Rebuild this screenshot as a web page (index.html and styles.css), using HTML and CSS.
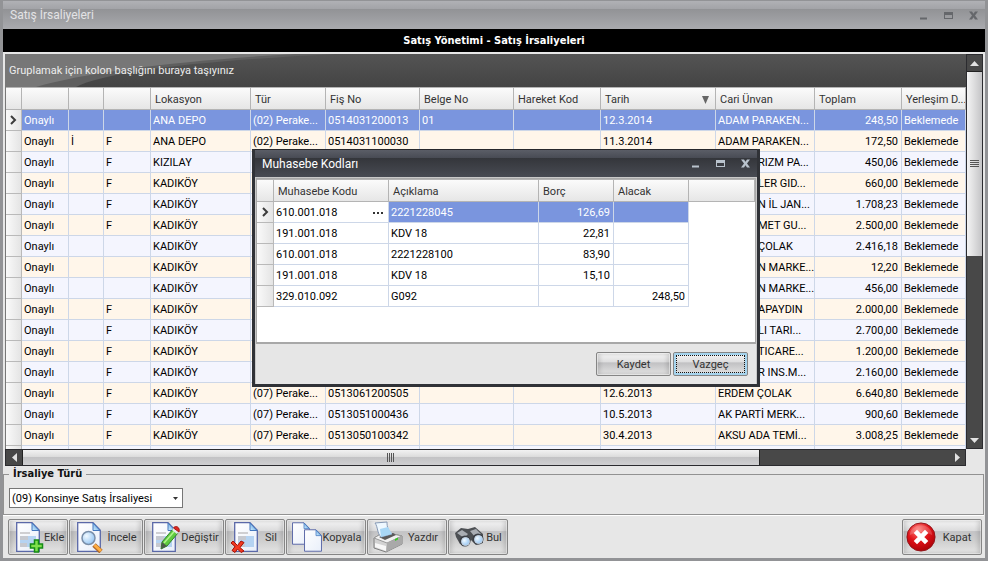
FILE: index.html
```html
<!DOCTYPE html>
<html lang="tr">
<head>
<meta charset="utf-8">
<title>Satış İrsaliyeleri</title>
<link rel="stylesheet" href="styles.css">
</head>
<body>
<svg class="defs" aria-hidden="true">
  <defs>
    <linearGradient id="sheet" x1="0" y1="0" x2="1" y2="1"><stop offset="0" stop-color="#fff"/><stop offset="1" stop-color="#e9effa"/></linearGradient>
    <linearGradient id="fold" x1="0" y1="1" x2="1" y2="0"><stop offset="0" stop-color="#d5f0fd"/><stop offset="1" stop-color="#3f8fdc"/></linearGradient>
    <radialGradient id="lens" cx=".35" cy=".35" r=".8"><stop offset="0" stop-color="#f2faff"/><stop offset="1" stop-color="#86bdf2"/></radialGradient>
    <radialGradient id="stop" cx=".4" cy=".25" r=".8"><stop offset="0" stop-color="#ff7d78"/><stop offset=".5" stop-color="#e01218"/><stop offset="1" stop-color="#a80006"/></radialGradient>
    <symbol id="page" viewBox="0 0 24 30">
      <path d="M.7.7H16L23.3 8.300V29.300H.7z" fill="url(#sheet)" stroke="#5a68a8" stroke-width="1.300"/>
      <path d="M16 1v7.500h7z" fill="url(#fold)" stroke="#4477bd"/>
    </symbol>
    <symbol id="doc" viewBox="0 0 24 30">
      <use href="#page" width="24" height="30"/>
      <path d="M4 10h10v2H4z" fill="#cfcfd2"/><path d="M4 14h16v11H4z" fill="#b5d3f2"/><path d="M4 14h8v4H4zM4 21h7v4H4z" fill="#c6c9d0"/>
    </symbol>
    <symbol id="pointer" viewBox="0 0 7 10"><path d="M1 1l4 4-4 4" fill="none" stroke="#3c3c3c" stroke-width="2"/></symbol>
    <symbol id="winmin" viewBox="0 0 9 9"><path d="M1 6.500h7v2H1z" fill="currentColor"/></symbol>
    <symbol id="winmax" viewBox="0 0 9 9"><path d="M0 1h9v7H0zM1 4v3h7V4z" fill="currentColor" fill-rule="evenodd"/></symbol>
    <symbol id="winclose" viewBox="0 0 9 9"><path d="M0 .5h3l1.500 2.300L6 .5h3L6 4.500l3 4H6L4.500 6.200 3 8.500H0l3-4z" fill="currentColor"/></symbol>
  </defs>
</svg>

<main class="window">
  <header class="titlebar">
    <h1>Satış İrsaliyeleri</h1>
    <div class="winctl">
      <button aria-label="Simge durumuna küçült"><svg><use href="#winmin"/></svg></button>
      <button aria-label="Ekranı kapla"><svg><use href="#winmax"/></svg></button>
      <button aria-label="Pencereyi kapat"><svg><use href="#winclose"/></svg></button>
    </div>
  </header>
  <h2 class="banner">Satış Yönetimi - Satış İrsaliyeleri</h2>

  <section class="gridbox">
    <div class="gridview">
      <div class="grouppanel">
        <svg viewBox="0 0 330 33" preserveAspectRatio="none"><path d="M0 0H330C190 7 100 18 70 33H0z" fill="#5f5f5f"/><path d="M0 0H290C180 6 80 18 30 33H0z" fill="#777"/></svg>
        <span>Gruplamak için kolon başlığını buraya taşıyınız</span>
      </div>
      <table class="data">
        <colgroup><col class="c-ind"><col class="c-durum"><col class="c-i"><col class="c-durum"><col class="c-lok"><col class="c-tur"><col class="c-no"><col class="c-no"><col class="c-tutar"><col class="c-tarih"><col class="c-cari"><col class="c-tutar"><col></colgroup>
        <thead><tr><th></th><th></th><th></th><th></th><th>Lokasyon</th><th>Tür</th><th>Fiş No</th><th>Belge No</th><th>Hareket Kod</th><th><div class="sorted">Tarih<svg viewBox="0 0 7 8"><path d="M0 0h7L3.500 8z"/></svg></div></th><th>Cari Ünvan</th><th>Toplam</th><th>Yerleşim D...</th></tr></thead>
        <tbody>
          <tr class="selected"><th><svg><use href="#pointer"/></svg></th><td>Onaylı</td><td></td><td></td><td>ANA DEPO</td><td>(02) Perake...</td><td>0514031200013</td><td>01</td><td></td><td>12.3.2014</td><td>ADAM PARAKEN...</td><td class="num">248,50</td><td>Beklemede</td></tr>
          <tr><th></th><td>Onaylı</td><td>İ</td><td>F</td><td>ANA DEPO</td><td>(02) Perake...</td><td>0514031100030</td><td></td><td></td><td>11.3.2014</td><td>ADAM PARAKEN...</td><td class="num">172,50</td><td>Beklemede</td></tr>
          <tr><th></th><td>Onaylı</td><td></td><td>F</td><td>KIZILAY</td><td></td><td></td><td></td><td></td><td></td><td class="tail">RIZM PA...</td><td class="num">450,06</td><td>Beklemede</td></tr>
          <tr><th></th><td>Onaylı</td><td></td><td>F</td><td>KADIKÖY</td><td></td><td></td><td></td><td></td><td></td><td class="tail">LER GID...</td><td class="num">660,00</td><td>Beklemede</td></tr>
          <tr><th></th><td>Onaylı</td><td></td><td>F</td><td>KADIKÖY</td><td></td><td></td><td></td><td></td><td></td><td class="tail">N İL JAN...</td><td class="num">1.708,23</td><td>Beklemede</td></tr>
          <tr><th></th><td>Onaylı</td><td></td><td>F</td><td>KADIKÖY</td><td></td><td></td><td></td><td></td><td></td><td class="tail">MET GU...</td><td class="num">2.500,00</td><td>Beklemede</td></tr>
          <tr><th></th><td>Onaylı</td><td></td><td></td><td>KADIKÖY</td><td></td><td></td><td></td><td></td><td></td><td class="tail">ÇOLAK</td><td class="num">2.416,18</td><td>Beklemede</td></tr>
          <tr><th></th><td>Onaylı</td><td></td><td></td><td>KADIKÖY</td><td></td><td></td><td></td><td></td><td></td><td class="tail">N MARKE...</td><td class="num">12,20</td><td>Beklemede</td></tr>
          <tr><th></th><td>Onaylı</td><td></td><td></td><td>KADIKÖY</td><td></td><td></td><td></td><td></td><td></td><td class="tail">N MARKE...</td><td class="num">456,00</td><td>Beklemede</td></tr>
          <tr><th></th><td>Onaylı</td><td></td><td>F</td><td>KADIKÖY</td><td></td><td></td><td></td><td></td><td></td><td class="tail">APAYDIN</td><td class="num">2.000,00</td><td>Beklemede</td></tr>
          <tr><th></th><td>Onaylı</td><td></td><td>F</td><td>KADIKÖY</td><td></td><td></td><td></td><td></td><td></td><td class="tail">LI TARI...</td><td class="num">2.700,00</td><td>Beklemede</td></tr>
          <tr><th></th><td>Onaylı</td><td></td><td>F</td><td>KADIKÖY</td><td></td><td></td><td></td><td></td><td></td><td class="tail">TICARE...</td><td class="num">1.200,00</td><td>Beklemede</td></tr>
          <tr><th></th><td>Onaylı</td><td></td><td>F</td><td>KADIKÖY</td><td></td><td></td><td></td><td></td><td></td><td class="tail">R INS.M...</td><td class="num">2.160,00</td><td>Beklemede</td></tr>
          <tr><th></th><td>Onaylı</td><td></td><td>F</td><td>KADIKÖY</td><td>(07) Perake...</td><td>0513061200505</td><td></td><td></td><td>12.6.2013</td><td>ERDEM ÇOLAK</td><td class="num">6.640,80</td><td>Beklemede</td></tr>
          <tr><th></th><td>Onaylı</td><td></td><td>F</td><td>KADIKÖY</td><td>(07) Perake...</td><td>0513051000436</td><td></td><td></td><td>10.5.2013</td><td>AK PARTİ MERK...</td><td class="num">900,60</td><td>Beklemede</td></tr>
          <tr><th></th><td>Onaylı</td><td></td><td>F</td><td>KADIKÖY</td><td>(07) Perake...</td><td>0513050100342</td><td></td><td></td><td>30.4.2013</td><td>AKSU ADA TEMİ...</td><td class="num">3.008,25</td><td>Beklemede</td></tr>
          <tr><th></th><td></td><td></td><td></td><td></td><td></td><td></td><td></td><td></td><td></td><td></td><td></td><td></td></tr>
        </tbody>
      </table>
    </div>
    <div class="scroll vert">
      <button aria-label="Yukarı kaydır"><svg viewBox="0 0 9 5"><path d="M0 5L4.500 0 9 5z"/></svg></button>
      <div class="thumb"><i></i></div>
      <button aria-label="Aşağı kaydır"><svg viewBox="0 0 9 5"><path d="M0 0h9L4.500 5z"/></svg></button>
    </div>
    <div class="scroll horz">
      <button aria-label="Sola kaydır"><svg viewBox="0 0 5 9"><path d="M5 0v9L0 4.500z"/></svg></button>
      <div class="thumb"><i></i></div>
      <button aria-label="Sağa kaydır"><svg viewBox="0 0 5 9"><path d="M0 0v9l5-4.500z"/></svg></button>
    </div>
  </section>

  <fieldset class="kind">
    <legend><label for="kind">İrsaliye Türü</label></legend>
    <div class="combo">
      <select id="kind"><option>(09) Konsinye Satış İrsaliyesi</option></select>
      <svg viewBox="0 0 5 3"><path d="M0 0h5L2.500 3z"/></svg>
    </div>
  </fieldset>

  <nav class="toolbar">
    <button class="tool w-s"><svg viewBox="0 0 30 32"><use href="#doc" x="2" y="1" width="24" height="30"/><path d="M20.500 19h4v4h4v4h-4v4h-4v-4h-4v-4h4z" fill="#7fe04c" stroke="#148a16" stroke-width="1.500"/></svg><span>Ekle</span></button>
    <button class="tool w-m"><svg viewBox="0 0 30 32"><use href="#page" x="2" y="1" width="24" height="30"/><path d="M19 24l7 6.500" stroke="#b06a2c" stroke-width="5"/><path d="M19.500 24l6.500 6" stroke="#ffae42" stroke-width="3"/><circle cx="13.500" cy="17" r="6.500" fill="url(#lens)" stroke="#7a8fa9" stroke-width="1.500"/></svg><span>İncele</span></button>
    <button class="tool w-l"><svg viewBox="0 0 30 32"><use href="#doc" x="2" y="1" width="24" height="30"/><path d="M12 21l11-13 5 4-11 13-6 3z" fill="#5ecb3e" stroke="#33842a"/><path d="M14 22L25 9.500" stroke="#b4f28e" stroke-width="1.500"/><path d="M12 21l5 4-6 3z" fill="#4c5b4b"/><path d="M22 9l1.500-2 5 4-1.500 2z" fill="#e7e7ef"/><path d="M23.500 7c2-3 7-1 5.500 4z" fill="#e0271f" stroke="#a41b14"/></svg><span>Değiştir</span></button>
    <button class="tool w-s"><svg viewBox="0 0 30 32"><use href="#doc" x="3" y="1" width="24" height="30"/><path d="M2 20l4.500 4.500L10 20l3 1.500-4 5 4 3.500-3 1.500-3.500-3.500L4 31.500l-3-2 3-4L0 22z" fill="#f23a22" stroke="#a31208"/></svg><span>Sil</span></button>
    <button class="tool w-l"><svg viewBox="0 0 30 32"><use href="#page" x="0" y="1" width="18" height="23"/><use href="#page" x="12" y="8" width="18" height="23"/></svg><span>Kopyala</span></button>
    <button class="tool w-l"><svg viewBox="0 0 30 32"><path d="M1 17l10-6 18 4v8L13 31 1 27z" fill="#d2d2d2" stroke="#7f7f7f"/><path d="M1 17l10-6 18 4-15 7z" fill="#f1f1f1" stroke="#999"/><path d="M14 22l15-7v8l-16 8z" fill="#a9a9a9"/><path d="M2 22l11 3v5L2 26z" fill="#f7f7f7"/><path d="M6 16l14-4 3 2-11 5z" fill="#5b5b5b"/><path d="M2 2l12-1c0 5 1 9 5 12l-11 3C4 12 5 6 2 2z" fill="#eef8ff" stroke="#8598b4"/><path d="M7 8l8-2 4 7-11 3z" fill="#a8d7f6"/><path d="M22 18l3-1.500v2l-3 1.500z" fill="#38c926"/></svg><span>Yazdır</span></button>
    <button class="tool w-s"><svg viewBox="0 0 30 32"><path d="M1 12l6-5 7 1 7-2 8 7v9l-7 2-5-5-4 5-7-1-4-7z" fill="#4d5054"/><path d="M3 12l5-3 6 4-4 4zM16 10l6-2 5 5-6 3z" fill="#a9adb3"/><circle cx="11" cy="20" r="5.500" fill="#3b3f46"/><circle cx="24" cy="18" r="5.500" fill="#3b3f46"/><circle cx="11.500" cy="20.500" r="4" fill="url(#lens)" stroke="#c9d5e2"/><circle cx="24.500" cy="18.500" r="4" fill="url(#lens)" stroke="#c9d5e2"/></svg><span>Bul</span></button>
    <button class="tool w-l close"><svg viewBox="0 0 32 32"><circle cx="16" cy="16" r="15" fill="url(#stop)" stroke="#8e1218"/><path d="M4 14C5 0 27 0 28 14c-8-4-16-4-24 0z" fill="#fff" opacity=".18"/><path d="M10 10l12 12M22 10L10 22" stroke="#fff" stroke-width="5"/></svg><span>Kapat</span></button>
  </nav>
</main>

<section class="dialog" role="dialog" aria-labelledby="dlgtitle">
  <header class="titlebar">
    <h2 id="dlgtitle">Muhasebe Kodları</h2>
    <div class="winctl">
      <button aria-label="Küçült"><svg><use href="#winmin"/></svg></button>
      <button aria-label="Büyüt"><svg><use href="#winmax"/></svg></button>
      <button aria-label="Kapat"><svg><use href="#winclose"/></svg></button>
    </div>
  </header>
  <div class="dlgbody">
    <div class="dlggrid">
      <table class="data plain">
        <colgroup><col class="c-ind2"><col class="c-kod"><col class="c-acik"><col class="c-tur"><col class="c-tur"><col></colgroup>
        <thead><tr><th></th><th>Muhasebe Kodu</th><th>Açıklama</th><th>Borç</th><th>Alacak</th><th></th></tr></thead>
        <tbody>
          <tr class="selected"><th><svg><use href="#pointer"/></svg></th><td class="editing"><div>610.001.018<button aria-label="Seç"><i></i><i></i><i></i></button></div></td><td>2221228045</td><td class="num">126,69</td><td></td><td class="rest"></td></tr>
          <tr><th></th><td>191.001.018</td><td>KDV 18</td><td class="num">22,81</td><td></td><td class="rest"></td></tr>
          <tr><th></th><td>610.001.018</td><td>2221228100</td><td class="num">83,90</td><td></td><td class="rest"></td></tr>
          <tr><th></th><td>191.001.018</td><td>KDV 18</td><td class="num">15,10</td><td></td><td class="rest"></td></tr>
          <tr><th></th><td>329.010.092</td><td>G092</td><td></td><td class="num">248,50</td><td class="rest"></td></tr>
        </tbody>
      </table>
    </div>
    <footer class="actions">
      <button class="act">Kaydet</button>
      <button class="act focused">Vazgeç</button>
    </footer>
  </div>
</section>
</body>
</html>
```
FILE: styles.css
```css
* { box-sizing: border-box; }
body, h1, h2 { margin: 0; }
body, button, select {
  font-family: Roboto, "Noto Sans", sans-serif;
  font-size: 11px;
}
button { padding: 0; border: 0; background: none; color: inherit; }
.defs { position: absolute; width: 0; height: 0; }

.window {
  display: flex;
  flex-direction: column;
  height: 100vh;
  border: solid #929396;
  border-width: 1px 3px 3px;
  background: #e7e7e7;
}
.titlebar {
  display: flex;
  align-items: center;
  justify-content: space-between;
  height: 28px;
  padding: 0 7px;
  background: linear-gradient(#b0b1b5, #a2a3a7 29%, #929396 30%, #a9aaae);
  color: #e3e3e5;
}
.titlebar h1, .titlebar h2 { font-size: 12px; font-weight: 400; }
.winctl { display: flex; gap: 16px; color: #65676b; }
.winctl button { display: flex; }
.winctl svg { width: 9px; height: 9px; }
.banner {
  height: 23px;
  background: #000;
  color: #fff;
  font: bold 11px/24px "DejaVu Sans Condensed", sans-serif;
  text-align: center;
}

.gridbox {
  flex: 1;
  display: grid;
  grid-template: minmax(0, 1fr) 17px / minmax(0, 1fr) 17px;
  min-height: 0;
  margin: 2px 2px 0;
}
.gridview { overflow: hidden; border-left: 1px solid #777; background: #fff; }
.grouppanel {
  position: relative;
  height: 33px;
  padding-left: 3px;
  background: linear-gradient(#545454, #444);
  color: #ededed;
  line-height: 34px;
}
.grouppanel svg { position: absolute; left: 0; top: 0; width: 330px; height: 33px; }
.grouppanel span { position: relative; }

.data { width: 100%; table-layout: fixed; border-spacing: 0; color: #000; }
.data th, .data td {
  height: 21px;
  padding: 2px 2px 0;
  overflow: hidden;
  border: solid #cdd7e8;
  border-width: 0 1px 1px 0;
  line-height: 18px;
  font-weight: 400;
  text-align: left;
  white-space: nowrap;
}
.data thead th {
  height: 23px;
  padding: 2px 0 0 4px;
  border-color: #b4b4b4;
  border-top: 1px solid #b4b4b4;
  background: linear-gradient(#fbfbfb, #e6e6e6);
  color: #333;
}
.data tbody th { padding: 0; border-color: #b9b9b9; background: linear-gradient(90deg, #fafafa, #e4e4e4); text-align: center; }
.data tbody th svg { display: block; width: 7px; height: 10px; margin: auto; }
.data tr:nth-child(even) td { background: #fff6ea; }
.data tr:nth-child(odd) td { background: #f4f5fe; }
.data.plain tr td { background: #fff; }
.data tr.selected td { background: #7a95de; color: #fff; }
.data .num { text-align: right; padding-right: 3px; }
.data .tail { padding-left: 42px; }
.data .rest { border: 0; }
.data.plain tr td.rest { background: #fff; }
.data.plain tr td.editing { background: #fff; color: #000; }
.editing div { display: flex; justify-content: space-between; }
.editing button { display: flex; align-items: center; gap: 2px; padding-right: 3px; }
.editing i { width: 2px; height: 2px; background: #333; }
.sorted { display: flex; align-items: center; justify-content: space-between; padding-right: 6px; }
.sorted svg { width: 7px; height: 8px; fill: #666; }
.c-ind { width: 16px; }
.c-ind2 { width: 17px; }
.c-durum { width: 47px; }
.c-i { width: 35px; }
.c-lok { width: 100px; }
.c-tur { width: 75px; }
.c-no { width: 94px; }
.c-tutar { width: 87px; }
.c-tarih { width: 115px; }
.c-cari { width: 99px; }
.c-kod { width: 115px; }
.c-acik { width: 150px; }

.scroll { display: flex; border: 1px solid #2b2b2f; background: #484848; }
.scroll button { display: flex; align-items: center; justify-content: center; flex: none; }
.scroll svg { fill: #e2e2e2; }
.scroll .thumb { display: flex; align-items: center; justify-content: center; }
.vert { flex-direction: column; }
.vert button { height: 16px; }
.vert svg { width: 9px; height: 5px; }
.vert .thumb { height: 47%; border-top: 1px solid #222; background: linear-gradient(90deg, #f4f4f4, #c4c4c6); }
.vert button:last-child { margin-top: auto; }
.vert i { width: 9px; height: 8px; background: repeating-linear-gradient(#555 0 1px, transparent 1px 2px); }
.horz button { width: 16px; }
.horz svg { width: 5px; height: 9px; }
.horz .thumb { width: 77%; border: solid #222; border-width: 0 1px; background: linear-gradient(#f2f2f2, #dcdcdc 45%, #c3c3c5 50%, #cfcfd1); }
.horz button:last-child { margin-left: auto; }
.horz i { width: 8px; height: 9px; background: repeating-linear-gradient(90deg, #555 0 1px, transparent 1px 2px); }

.kind {
  margin: 1px 1px 0 0;
  padding: 7px 5px 6px;
  border: 1px solid #929292;
  box-shadow: 0 1px #fff;
}
.kind legend { padding: 0 4px; font: bold 11px/14px "DejaVu Sans Condensed", sans-serif; color: #111; }
.combo { position: relative; width: 174px; }
.combo select {
  display: block;
  width: 100%;
  height: 20px;
  padding: 0 2px;
  border: 1px solid #767676;
  border-radius: 0;
  appearance: none;
  background: #fff;
  color: #000;
}
.combo svg { position: absolute; right: 5px; top: 9px; width: 5px; height: 3px; fill: #333; }

.toolbar { display: flex; gap: 1px; padding: 4px 3px 3px 5px; }
.tool {
  display: flex;
  align-items: center;
  height: 36px;
  padding: 0 3px 0 5px;
  border: 1px solid #858585;
  border-radius: 2px;
  background: linear-gradient(#f6f6f6, #dbdbdc 32%, #c3c3c5 34%, #cecece 60%, #e6e6e6);
  box-shadow: inset 0 0 0 1px #ffffff66, inset 3px 0 4px #0002, inset -3px 0 4px #0002;
  color: #333;
}
.tool svg { flex: none; width: 30px; height: 32px; }
.tool span { flex: 1; text-align: center; }
.w-s { width: 60px; }
.w-m { width: 74px; }
.w-l { width: 80px; }
.close { margin-left: auto; padding-left: 3px; }

.dialog {
  position: absolute;
  left: 252px;
  top: 149px;
  width: 508px;
  border: solid #303237;
  border-width: 0 3px 3px;
  box-shadow: inset 0 1px #202226;
}
.dialog .titlebar {
  border-top: 1px solid #26272b;
  background: linear-gradient(#5b5e67, #484b54 29%, #34363b 30%, #484b53);
  color: #fff;
}
.dialog .winctl { color: #b9c3cd; }
.dlgbody { border: solid #c9c9c9; border-width: 1px 1px 0; background: #e6e6e6; }
.dlggrid { height: 166px; border: solid #a8a8a8; border-width: 1px 1px 2px; background: #fff; }
.actions { display: flex; justify-content: flex-end; gap: 2px; padding: 8px; }
.act {
  width: 75px;
  height: 24px;
  border: 1px solid #858585;
  border-radius: 2px;
  background: linear-gradient(#f7f7f7, #dededf 40%, #c1c1c3 45%, #e4e4e4);
  box-shadow: inset 0 0 0 1px #ffffff77, inset 3px 0 4px #0002, inset -3px 0 4px #0002;
  color: #333;
}
.focused { outline: 1px dotted #111; outline-offset: -4px; box-shadow: inset 0 0 0 2px #a5d4ee; }
```
